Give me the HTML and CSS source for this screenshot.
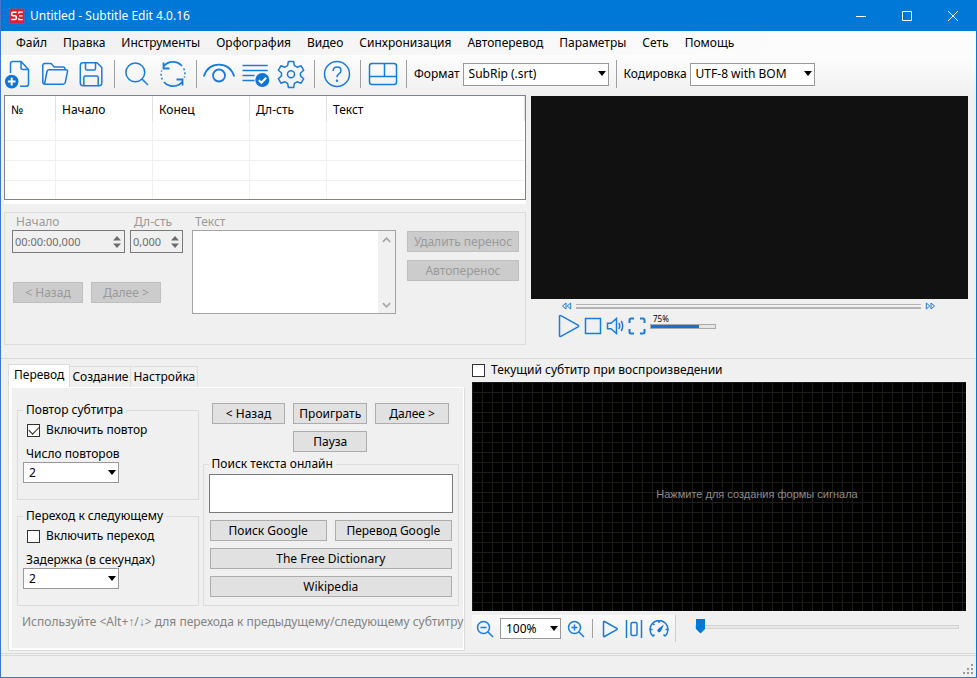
FILE: index.html
```html
<!DOCTYPE html>
<html lang="ru">
<head>
<meta charset="utf-8">
<title>Untitled - Subtitle Edit 4.0.16</title>
<link rel="stylesheet" href="styles.css">
</head>
<body>
<div class="window">
  <header class="titlebar">
    <svg class="logo" viewBox="0 0 16 16" aria-hidden="true"><rect width="16" height="16" rx="2" fill="#d9232e"/><path d="M7.500 4.300H4q-1.300 0-1.300 1.200v1.100q0 1.200 1.300 1.200h2q1.300 0 1.300 1.200v1.300q0 1.200-1.300 1.200H2.300" fill="none" stroke="#fff" stroke-width="1.500"/><path d="M13.800 4.200H9.800v1.500M13.500 7.900H10M13.800 11.600H9.800v-1.500" fill="none" stroke="#fff" stroke-width="1.200"/></svg>
    <h1 class="title">Untitled - Subtitle Edit 4.0.16</h1>
    <div class="window-buttons">
      <button class="win-btn" aria-label="Свернуть"><svg viewBox="0 0 12 12"><path d="M1 6.500h10"/></svg></button>
      <button class="win-btn" aria-label="Развернуть"><svg viewBox="0 0 12 12"><path d="M1.500 1.500h9v9h-9z"/></svg></button>
      <button class="win-btn" aria-label="Закрыть"><svg viewBox="0 0 12 12"><path d="M1 1l10 10M11 1L1 11"/></svg></button>
    </div>
  </header>

  <nav class="menu">
    <button>Файл</button><button>Правка</button><button>Инструменты</button><button>Орфография</button><button>Видео</button><button>Синхронизация</button><button>Автоперевод</button><button>Параметры</button><button>Сеть</button><button>Помощь</button>
  </nav>

  <div class="toolbar">
    <button class="tool" aria-label="Новый"><svg viewBox="0 0 36 36"><path d="M9.500 17V7.500a2 2 0 0 1 2-2H20l7.500 8V28a2.300 2.300 0 0 1-2.300 2.300H19M20 5.500v6a2 2 0 0 0 2 2h5.500"/><circle cx="10.700" cy="25.600" r="6.800" class="solid"/><path d="M10.700 21.800v7.600M6.900 25.600h7.600" class="knock"/></svg></button>
    <button class="tool" aria-label="Открыть"><svg viewBox="0 0 36 36"><path d="M7.500 28.200L10 15.500q.3-1.700 2-1.700h17q1.900 0 1.500 1.900l-2.200 10.700q-.4 1.800-2.300 1.800H8.200q-2.400 0-2.400-2.300V9.800q0-2.200 2.200-2.200h5.200q1.300 0 2 1l1.300 1.600q.5.700 1.400.7h7.900q2.200 0 2.200 2.200v.7"/></svg></button>
    <button class="tool" aria-label="Сохранить"><svg viewBox="0 0 36 36"><path d="M10 6.700h14l4.800 4.800V27q0 2.700-2.700 2.700H10q-2.700 0-2.700-2.700V9.400q0-2.700 2.700-2.700zM12.500 6.700v6q0 1.300 1.300 1.300h7.400q1.300 0 1.300-1.300v-6M10.800 29.700v-8q0-1.700 1.700-1.700h11q1.700 0 1.700 1.700v8"/></svg></button>
    <span class="sep"></span>
    <button class="tool" aria-label="Найти"><svg viewBox="0 0 36 36"><circle cx="16.300" cy="16.400" r="9.400"/><path d="M23 23l6 6"/></svg></button>
    <button class="tool" aria-label="Заменить"><svg viewBox="0 0 36 36"><path d="M8.500 10.500A12 12 0 0 1 27 10M8.500 6.500v6h6M27.500 25.500A12 12 0 0 1 9 26M27.500 29.500v-6h-6" class="bold"/><path d="M28.700 12.500A12 12 0 0 1 29.300 21.500M7.300 23.500A12 12 0 0 1 6.700 14.500" stroke-dasharray="1.800 2.200"/></svg></button>
    <span class="sep"></span>
    <button class="tool" aria-label="Визуальная синхронизация"><svg viewBox="0 0 36 36"><path d="M2.700 20.500C5.500 12.500 11 8.700 18 8.700s12.500 3.800 15.300 11.800" class="bold"/><circle cx="18" cy="19.500" r="6" class="bold"/></svg></button>
    <button class="tool" aria-label="Проверка орфографии"><svg viewBox="0 0 36 36"><path d="M5.500 9.500h25.200M5.500 14.500h25.200M5.500 19.500h12M5.500 24.500h12"/><circle cx="25.300" cy="24" r="7" class="solid"/><path d="M21.800 24.200l2.600 2.600 4.800-5" class="knock"/></svg></button>
    <button class="tool" aria-label="Настройки"><svg viewBox="0 0 36 36"><path stroke-linejoin="round" d="M15.400 5.500h5.200l.8 4.100 2.700 1.600 4-1.400 2.600 4.500-3.200 2.700v2.900l3.200 2.800-2.600 4.500-4-1.400-2.700 1.600-.8 4.100h-5.200l-.8-4.100-2.700-1.600-4 1.400-2.600-4.500 3.200-2.800v-2.900l-3.200-2.700 2.600-4.500 4 1.400 2.700-1.600z"/><circle cx="18" cy="18.300" r="3.500"/></svg></button>
    <span class="sep"></span>
    <button class="tool" aria-label="Справка"><svg viewBox="0 0 36 36"><circle cx="18" cy="18" r="12.500"/><path d="M14.200 15q0-3.900 3.900-3.900t3.900 3.500q0 2-2.100 3.300t-1.900 3.300"/><circle cx="18" cy="24.800" r=".5"/></svg></button>
    <span class="sep"></span>
    <button class="tool" aria-label="Макет"><svg viewBox="0 0 36 36"><rect x="4.500" y="7.500" width="27" height="21" rx="2.500"/><path d="M4.500 20.500h27M19.500 7.500v13"/></svg></button>
    <span class="sep"></span>
    <label class="tool-field">Формат
      <span class="select format"><select><option>SubRip (.srt)</option></select></span>
    </label>
    <span class="sep"></span>
    <label class="tool-field">Кодировка
      <span class="select encoding"><select><option>UTF-8 with BOM</option></select></span>
    </label>
  </div>

  <main class="workspace">
    <section class="top">
      <div class="editor">
        <div class="list">
          <table class="subs">
            <colgroup><col class="c-num"><col class="c-time"><col class="c-time"><col class="c-dur"><col></colgroup>
            <thead><tr><th>№</th><th>Начало</th><th>Конец</th><th>Дл-сть</th><th>Текст</th></tr></thead>
            <tbody>
              <tr><td></td><td></td><td></td><td></td><td></td></tr>
              <tr><td></td><td></td><td></td><td></td><td></td></tr>
              <tr><td></td><td></td><td></td><td></td><td></td></tr>
              <tr><td></td><td></td><td></td><td></td><td></td></tr>
            </tbody>
          </table>
        </div>
        <div class="edit-box">
          <div class="times">
            <div class="time-fields">
              <label class="spin-field start">Начало
                <span class="spin"><input type="text" value="00:00:00,000" disabled><svg viewBox="0 0 8 14"><path d="M0 5.500h8L4 1zM0 8.500h8L4 13z"/></svg></span>
              </label>
              <label class="spin-field duration">Дл-сть
                <span class="spin"><input type="text" value="0,000" disabled><svg viewBox="0 0 8 14"><path d="M0 5.500h8L4 1zM0 8.500h8L4 13z"/></svg></span>
              </label>
            </div>
            <div class="step-buttons"><button class="btn" disabled>&lt; Назад</button><button class="btn" disabled>Далее &gt;</button></div>
          </div>
          <label class="text-field">Текст
            <span class="text-wrap"><textarea disabled></textarea><span class="scroll"><svg viewBox="0 0 10 6"><path d="M1 5l4-4 4 4"/></svg><svg viewBox="0 0 10 6"><path d="M1 1l4 4 4-4"/></svg></span></span>
          </label>
          <div class="break-buttons"><button class="btn" disabled>Удалить перенос</button><button class="btn" disabled>Автоперенос</button></div>
        </div>
      </div>

      <div class="player">
        <div class="screen"></div>
        <div class="seek">
          <button class="mini" aria-label="Назад"><svg viewBox="0 0 10 8"><path d="M4.500 1v6L1 4zM9.200 1v6L5.700 4z"/></svg></button>
          <input class="seek-range" type="range" min="0" max="100" value="0" aria-label="Позиция">
          <button class="mini" aria-label="Вперёд"><svg viewBox="0 0 10 8"><path d="M.8 1v6l3.500-3zM5.500 1v6L9 4z"/></svg></button>
        </div>
        <div class="controls">
          <button class="ctl play" aria-label="Воспроизвести"><svg viewBox="0 0 22 24"><path d="M1.500 2.500q0-1.500 1.400-.8L20 11.200q1.200.8 0 1.600L2.900 22.300q-1.400.7-1.400-.8z"/></svg></button>
          <button class="ctl" aria-label="Стоп"><svg viewBox="0 0 18 18"><path d="M1.500 1.500h15v15h-15z"/></svg></button>
          <button class="ctl" aria-label="Звук"><svg viewBox="0 0 18 18"><path d="M1.500 6.200h3.500L10.500 1.500v15L5 11.800H1.500zM12.800 6q1.800 3 0 6M15.200 4q3 5 0 10"/></svg></button>
          <button class="ctl" aria-label="Во весь экран"><svg viewBox="0 0 18 18"><path d="M1.500 6V3q0-1.500 1.500-1.500h3M12 1.500h3q1.500 0 1.500 1.500v3M16.500 12v3q0 1.500-1.500 1.500h-3M6 16.500H3q-1.500 0-1.500-1.500v-3" class="thick"/></svg></button>
          <label class="volume">75%<input type="range" min="0" max="100" value="75"></label>
        </div>
      </div>
    </section>

    <section class="bottom">
      <div class="tabs">
        <div class="tab-list" role="tablist">
          <button role="tab" aria-selected="true">Перевод</button><button role="tab" aria-selected="false">Создание</button><button role="tab" aria-selected="false">Настройка</button>
        </div>
        <div class="tab-panel" role="tabpanel">
          <div class="panel-grid">
            <div class="options">
              <fieldset class="group">
                <legend>Повтор субтитра</legend>
                <label class="check"><input type="checkbox" checked>Включить повтор</label>
                <label class="option">Число повторов
                  <span class="select"><select><option>2</option></select></span>
                </label>
              </fieldset>
              <fieldset class="group">
                <legend>Переход к следующему</legend>
                <label class="check"><input type="checkbox">Включить переход</label>
                <label class="option">Задержка (в секундах)
                  <span class="select"><select><option>2</option></select></span>
                </label>
              </fieldset>
            </div>
            <div class="actions">
              <div class="play-buttons"><button class="btn">&lt; Назад</button><button class="btn">Проиграть</button><button class="btn">Далее &gt;</button><button class="btn pause">Пауза</button></div>
              <fieldset class="group search">
                <legend>Поиск текста онлайн</legend>
                <textarea aria-label="Поиск текста онлайн"></textarea>
                <div class="search-buttons"><button class="btn">Поиск Google</button><button class="btn">Перевод Google</button><button class="btn wide">The Free Dictionary</button><button class="btn wide">Wikipedia</button></div>
              </fieldset>
            </div>
          </div>
          <p class="hint">Используйте &lt;Alt+↑/↓&gt; для перехода к предыдущему/следующему субтитру</p>
        </div>
      </div>

      <div class="wave">
        <label class="check"><input type="checkbox">Текущий субтитр при воспроизведении</label>
        <div class="waveform">Нажмите для создания формы сигнала</div>
        <div class="wave-bar">
          <div class="wave-tools">
            <button class="wtool" aria-label="Уменьшить"><svg viewBox="0 0 18 18"><circle cx="7.500" cy="7.500" r="6"/><path d="M12 12l5 5M4.500 7.500h6"/></svg></button>
            <span class="select zoom"><select aria-label="Масштаб"><option>100%</option></select></span>
            <button class="wtool" aria-label="Увеличить"><svg viewBox="0 0 18 18"><circle cx="7.500" cy="7.500" r="6"/><path d="M12 12l5 5M4.500 7.500h6M7.500 4.500v6"/></svg></button>
            <span class="sep"></span>
            <button class="wtool" aria-label="Воспроизвести"><svg viewBox="0 0 18 18"><path d="M2.500 2q0-1 1-.5l12.300 6.800q.9.700 0 1.300L3.500 16.500q-1 .5-1-.5z"/></svg></button>
            <button class="wtool" aria-label="Центрировать"><svg viewBox="0 0 18 18"><path d="M1.500 0v18M16.500 0v18"/><rect x="6" y="2.500" width="6" height="13" rx="1.500"/></svg></button>
            <button class="wtool speed" aria-label="Скорость"><svg viewBox="0 0 20 18"><path d="M4 16.200A9 9 0 1 1 16 16.200M4 16.200l1.500-1.700M16 16.200l-1.500-1.700M1 9.500h2.500M16.500 9.500H19M10 .6V3M3.700 3.300l1.700 1.700"/><path d="M15 4.500L9 9q-1.500 2 0 3 1.500 1 3-1z" class="solid"/></svg></button>
          </div>
          <input class="wave-range" type="range" min="0" max="100" value="0" aria-label="Позиция сигнала">
        </div>
      </div>
    </section>
  </main>

  <footer class="status">
    <svg viewBox="0 0 11 11" aria-hidden="true"><path d="M8 0h2v2H8zM4 4h2v2H4zM8 4h2v2H8zM0 8h2v2H0zM4 8h2v2H4zM8 8h2v2H8z"/></svg>
  </footer>
</div>
</body>
</html>
```
FILE: styles.css
```css
* { box-sizing: border-box; }

body {
  margin: 0;
  background: #f0f0f0;
  color: #000;
  font: 12px/16px "Noto Sans", "Open Sans", sans-serif;
}

button, input, select, textarea { font: inherit; color: inherit; margin: 0; }
button { border: 0; padding: 0; background: none; }
svg { display: block; fill: none; stroke: #1b7bdc; stroke-width: 1.5; }
svg .solid { fill: #0f74d8; stroke: none; }
svg .knock { stroke: #fff; stroke-width: 2; }
svg .bold { stroke-width: 1.8; }
svg .thick { stroke-width: 2; }

.window {
  display: flex;
  flex-direction: column;
  min-height: 100vh;
  border: 1px solid #0078d7;
  border-top: 0;
  border-left-color: #4477c8;
  border-bottom-color: #4477c8;
}

/* Title bar */
.titlebar {
  display: flex;
  align-items: center;
  height: 31px;
  padding-left: 8px;
  background: #0078d7;
  color: #fff;
}
.logo { width: 16px; height: 16px; margin-right: 5px; }
.title { flex: 1; margin: 0; font-size: 12px; font-weight: 400; }
.window-buttons { display: flex; }
.win-btn { display: grid; place-items: center; width: 46px; height: 30px; }
.win-btn svg { width: 12px; height: 12px; stroke: #fff; stroke-width: 1; }

/* Menu and toolbar */
.menu {
  display: flex;
  height: 24px;
  padding-left: 7px;
  background: linear-gradient(90deg, #f0f0f0, #fcfcfc 80%);
}
.menu button { padding: 0 8px; }

.toolbar {
  display: flex;
  align-items: center;
  height: 40px;
  padding-bottom: 2px;
  background: linear-gradient(#fdfdfd, #f0f0f0);
}
.tool, .tool svg { width: 36px; height: 36px; }
.sep { flex: none; width: 1px; height: 28px; margin: 0 4px 0 5px; background: #a0a0a0; }
.tool-field { display: flex; align-items: center; gap: 3px; padding: 0 2px 0 3px; }

.select { position: relative; display: block; }
.select::after {
  content: "";
  position: absolute;
  top: 50%;
  right: 3px;
  margin-top: -3px;
  border: solid transparent;
  border-width: 5px 4px 0;
  border-top-color: #000;
  pointer-events: none;
}
.select select {
  display: block;
  appearance: none;
  width: 100%;
  height: 21px;
  padding: 0 16px 0 5px;
  border: 1px solid #999;
  border-radius: 0;
  background: #fff;
}
.format { width: 146px; }
.encoding { width: 125px; }
.toolbar .select select { height: 23px; }

/* Workspace */
.workspace { display: flex; flex-direction: column; flex: 1; }
.top {
  display: grid;
  grid-template-columns: 522fr 437fr;
  gap: 5px;
  padding: 0 8px 13px 3px;
  border-bottom: 1px solid #d9d9d9;
}
.editor { display: flex; flex-direction: column; gap: 8px; }
.list { padding-bottom: 4px; background: #fff; }
.subs {
  width: 100%;
  table-layout: fixed;
  border-spacing: 0;
  border: 1px solid #7f838c;
  background: #fff;
}
.c-num { width: 51px; }
.c-time { width: 97px; }
.c-dur { width: 77px; }
.subs th {
  height: 25px;
  padding: 3px 6px 0;
  border-right: 1px solid #e0e0e0;
  font-weight: 400;
  text-align: left;
}
.subs td { padding: 0; height: 20px; border-right: 1px solid #f0f0f0; border-bottom: 1px solid #f0f0f0; }
.subs td:last-child { border-right: 0; }
.subs tbody tr:last-child td { height: 18px; border-bottom: 0; }

.edit-box {
  display: flex;
  align-items: flex-start;
  gap: 9px;
  flex: 1;
  min-height: 133px;
  padding: 1px 6px 6px 7px;
  border: 1px solid #dcdcdc;
  color: #9a9a9a;
}
.times { width: 171px; }
.time-fields { display: flex; gap: 5px; }
.spin-field { text-indent: 4px; }
.start { width: 113px; }
.duration { width: 53px; }
.spin {
  display: flex;
  align-items: center;
  height: 23px;
  padding-right: 3px;
  border: 1px solid #7a7a7a;
}
.spin input {
  flex: 1;
  min-width: 0;
  padding: 0 2px;
  border: 0;
  background: none;
  color: #6d6d6d;
  font-size: 11px;
  text-indent: 0;
}
.spin svg { width: 8px; height: 14px; fill: #6d6d6d; stroke: none; }
.step-buttons { display: flex; gap: 8px; margin: 29px 0 0 1px; }
.step-buttons .btn { width: 70px; }

.btn {
  height: 21px;
  border: 1px solid #adadad;
  background: #e1e1e1;
  line-height: 18px;
  white-space: nowrap;
}
.btn:disabled { border-color: #bfbfbf; background: #ccc; color: #9a9a9a; }

.text-field { flex: 1; text-indent: 3px; }
.text-wrap { display: flex; height: 84px; border: 1px solid #a5a5a5; background: #fff; }
.text-wrap textarea { flex: 1; min-width: 0; border: 0; background: #fff; resize: none; }
.scroll {
  display: flex;
  flex-direction: column;
  justify-content: space-between;
  width: 17px;
  padding: 6px 4px 5px;
  background: #f0f0f0;
}
.scroll svg { width: 9px; height: 6px; stroke: #a8a8a8; stroke-width: 2; }
.break-buttons { display: grid; gap: 8px; width: 112px; margin: 17px 0 0 2px; }

/* Player */
.screen { height: 203px; margin-top: 1px; background: #111; }
.seek { display: flex; align-items: center; gap: 4px; height: 14px; padding: 0 32px 0 30px; }
.mini svg { width: 11px; height: 8px; stroke-width: 1; }
input[type="range"] { appearance: none; background: none; height: 5px; min-width: 0; }
.seek-range { flex: 1; border: solid #b4b4b4; border-width: 1px 0 2px; }
.seek-range::-webkit-slider-thumb, .volume input::-webkit-slider-thumb { appearance: none; width: 0; height: 0; }
.controls { display: flex; align-items: center; gap: 4px; height: 26px; padding-left: 27px; }
.ctl svg { width: 18px; height: 18px; }
.ctl.play svg { width: 22px; height: 24px; }
.volume { display: flex; flex-direction: column; padding-bottom: 10px; font-size: 8px; line-height: 10px; text-indent: 3px; }
.volume input {
  width: 66px;
  border: 1px solid #aaa;
  background: linear-gradient(90deg, #0f74d8 75%, #e6e6e6 75%);
}

/* Tabs */
.bottom {
  display: grid;
  grid-template-columns: minmax(0, 457fr) minmax(0, 494fr);
  gap: 7px;
  flex: 1;
  padding: 5px 10px 2px 7px;
  border-bottom: 1px solid #d9d9d9;
}
.tabs { display: flex; flex-direction: column; }
.tab-list { display: flex; align-items: flex-end; }
.tab-list button {
  height: 21px;
  padding: 0 2px;
  border: solid #dcdcdc;
  border-width: 1px 1px 0 0;
}
.tab-list button[aria-selected="true"] { height: 23px; padding: 0 5px 2px; border-left-width: 1px; background: #fff; }
.tab-panel {
  flex: 1;
  padding: 14px 2px 0 6px;
  border: 1px solid #dcdcdc;
  border-top-color: #fff;
  box-shadow: inset 3px -2px #fff, inset -1px 0 #fff;
}
.panel-grid { display: grid; grid-template-columns: 182fr 257fr; gap: 4px; padding: 0 3px 0 2px; }
.options { display: flex; flex-direction: column; gap: 8px; }
.group { min-width: 0; margin: 0; padding: 4px 5px 6px; border: 1px solid #dcdcdc; }
.group legend { padding: 0 3px; }
.check { display: flex; align-items: center; gap: 6px; }
.options .check { padding-left: 4px; }
.check input {
  appearance: none;
  display: grid;
  place-items: center;
  width: 13px;
  height: 13px;
  border: 1px solid #333;
  background: #fff;
}
.check input:checked::before {
  content: "";
  width: 9px;
  height: 5px;
  margin-bottom: 3px;
  border: solid #222;
  border-width: 0 0 1px 1px;
  transform: rotate(-45deg);
}
.options .group { height: 98px; }
.option { display: block; margin-top: 8px; text-indent: 3px; }
.option .select { width: 96px; text-indent: 0; }
.actions { display: flex; flex-direction: column; }
.play-buttons {
  display: grid;
  grid-template-columns: repeat(3, 1fr);
  gap: 7px 8px;
  padding: 1px 10px 4px 9px;
}
.pause { grid-column: 2; }
.search { flex: 1; padding: 2px 5px 6px; }
.search textarea { display: block; width: 100%; height: 39px; border: 1px solid #7a7a7a; border-radius: 0; resize: none; }
.search-buttons { display: grid; grid-template-columns: 1fr 1fr; gap: 7px 8px; padding: 7px 1px 0; }
.wide { grid-column: span 2; }
.hint { margin: 8px 0 0 7px; color: #838383; white-space: nowrap; }

/* Waveform */
.wave { display: flex; flex-direction: column; }
.wave > .check { height: 18px; padding-bottom: 6px; }
.waveform {
  display: grid;
  place-items: center;
  flex: 1;
  min-height: 229px;
  padding: 0 0 6px 76px;
  background:
    linear-gradient(90deg, #1b1b18 1px, transparent 1px) 0 0 / 10px 10px,
    linear-gradient(#1b1b18 1px, transparent 1px) 0 0 / 10px 10px,
    #000;
  color: #8c8c8c;
  font-family: "Liberation Sans", Arial, sans-serif;
  font-size: 11px;
}
.wave-bar { display: flex; align-items: flex-start; gap: 19px; height: 40px; padding: 4px 7px 0 0; }
.wave-tools {
  display: flex;
  align-items: center;
  gap: 6px;
  height: 27px;
  padding: 0 6px 0 4px;
  background: linear-gradient(#fafafa, #f0f0f0);
  border-right: 1px solid #ccc;
}
.wave-tools .sep { height: 19px; margin: 0 2px 0 1px; }
.wtool svg { width: 18px; height: 18px; }
.wtool.speed svg { width: 20px; }
.zoom { width: 61px; }
.wave-range { flex: 1; margin-top: 9px; }
.wave-range::-webkit-slider-runnable-track { height: 4px; border: 1px solid #d3d3d3; background: #e7e7e7; }
.wave-range::-webkit-slider-thumb {
  appearance: none;
  width: 9px;
  height: 15px;
  margin-top: -7px;
  background: #0078d7;
  clip-path: polygon(0 0, 100% 0, 100% 70%, 50% 100%, 0 70%);
}

.status {
  display: flex;
  align-items: flex-end;
  justify-content: flex-end;
  height: 22px;
  margin-top: 1px;
  padding: 0 2px 2px;
  border-top: 1px solid #d9d9d9;
}
.status svg { width: 11px; height: 11px; fill: #9a9a9a; stroke: none; }
```
